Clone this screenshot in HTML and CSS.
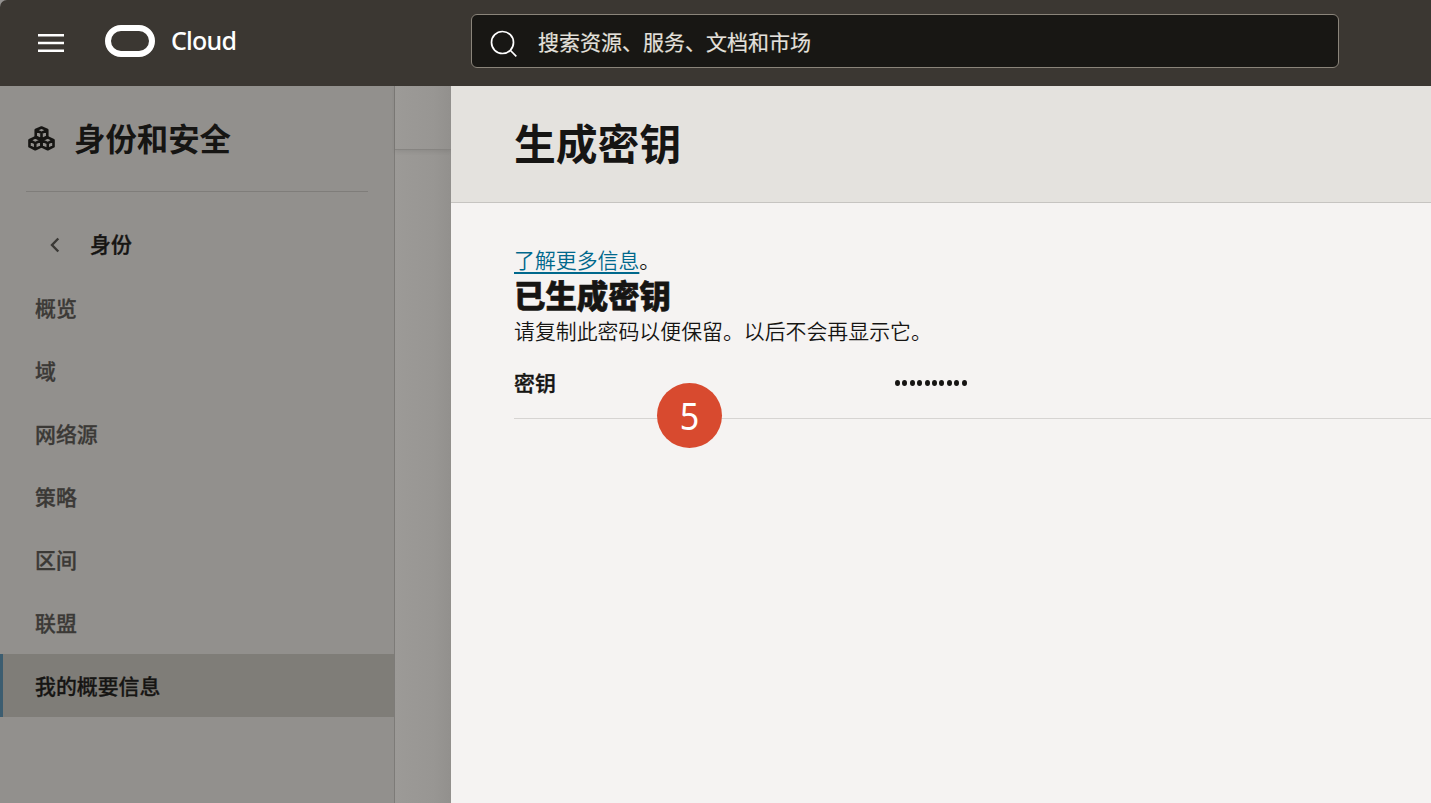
FILE: index.html
```html
<!DOCTYPE html>
<html lang="zh-CN">

<head>
    <meta charset="UTF-8">
    <meta name="viewport" content="width=device-width, initial-scale=1.0">
    <title>生成密钥</title>
    <link rel="stylesheet" href="styles.css">
</head>

<body>
    <header class="header">
        <svg class="menu" width="26" height="18" viewBox="0 0 26 18">
            <path d="M0 1.2h26M0 9h26M0 16.8h26" stroke="#fff" stroke-width="2.4" />
        </svg>
        <svg class="logo" width="50" height="32" viewBox="0 0 50 32">
            <rect x="3" y="3" width="44" height="26" rx="13" fill="none" stroke="#fff" stroke-width="6" />
        </svg>
        <span class="brand">Cloud</span>
        <div class="search">
            <svg width="28" height="28" viewBox="0 0 28 28" fill="none" stroke="#fff" stroke-width="1.7">
                <circle cx="12.5" cy="12.5" r="11" />
                <path d="M20 20l6.3 6.3" />
            </svg>
            <span>搜索资源、服务、文档和市场</span>
        </div>
    </header>
    <div class="main">
        <aside class="sidebar">
            <div class="side-title">
                <svg width="27" height="25" viewBox="0 0 28 26" fill="none" stroke="#161513" stroke-width="2.7" stroke-linejoin="round">
                    <path d="M14 1.5l6 2.700v6.800l-6 3-6-3V4.200z M8 4.200l6 3 6-3M14 7.200v6.600" />
                    <path d="M7.500 11.800l6.500 3v6.400l-6.500 3-6-3v-6.400z M1.500 14.800l6 3 6.500-3M7.500 17.800v6.400" />
                    <path d="M20.500 11.800l6 3v6.400l-6 3-6.500-3v-6.400z M14 14.800l6.500 3 6-3M20.500 17.800v6.400" />
                </svg>
                <h2>身份和安全</h2>
            </div>
            <div class="back">
                <svg width="10" height="16" viewBox="0 0 10 16">
                    <path d="M8.300 1.500L2 8l6.300 6.500" fill="none" stroke="#3a3835" stroke-width="2.4" />
                </svg>
                <span>身份</span>
            </div>
            <ul class="nav">
                <li>概览</li>
                <li>域</li>
                <li>网络源</li>
                <li>策略</li>
                <li>区间</li>
                <li>联盟</li>
                <li class="active">我的概要信息</li>
            </ul>
        </aside>
        <div class="page">
            <div class="page-top"></div>
        </div>
        <section class="panel">
            <div class="panel-head">
                <h1>生成密钥</h1>
            </div>
            <div class="panel-body">
                <p><a href="#">了解更多信息</a>。</p>
                <h3>已生成密钥</h3>
                <p>请复制此密码以便保留。以后不会再显示它。</p>
                <div class="row">
                    <span class="label">密钥</span>
                    <span class="dots"><i></i><i></i><i></i><i></i><i></i><i></i><i></i><i></i><i></i><i></i></span>
                    <span class="step"><b>5</b></span>
                </div>
            </div>
        </section>
    </div>
</body>

</html>
```
FILE: styles.css
```css
* {
    box-sizing: border-box;
}

body,
h1,
h2,
h3,
p,
ul {
    margin: 0;
    padding: 0;
}

body {
    height: 803px;
    overflow: hidden;
    background: #949290;
    color: #161513;
    font-family: "Noto Sans CJK SC", sans-serif;
    font-size: 20.900px;
}

svg {
    display: block;
    flex: none;
}

.header {
    display: flex;
    height: 86px;
    padding: 14px 0 0 38px;
    background: #3b3732;
    border-top-left-radius: 7px;
}

.menu {
    margin-top: 20px;
}

.logo {
    margin: 11px 0 0 41px;
}

.brand {
    width: 300px;
    margin-left: 16px;
    color: #fff;
    font: 500 25px/53px "Noto Sans", sans-serif;
    letter-spacing: -0.800px;
}

.search {
    display: flex;
    width: 868px;
    height: 54px;
    padding: 15px 18px;
    background: #181714;
    border: 1px solid #8a847a;
    border-radius: 6px;
    color: #e4e1dd;
    font-size: 21px;
    line-height: 22px;
}

.search span {
    margin-left: 20px;
    -webkit-text-stroke: 0.200px;
}

.main {
    display: flex;
    height: 717px;
}

.sidebar {
    width: 395px;
    background: #92908d;
    border-right: 1px solid #7d7b78;
}

.side-title {
    display: flex;
    align-items: center;
    height: 106px;
    margin: 0 26px;
    padding-left: 2px;
    border-bottom: 1px solid #7f7d7a;
}

.side-title h2 {
    margin-left: 19px;
    padding-bottom: 2px;
    font-size: 31.400px;
    font-weight: 600;
}

.back {
    display: flex;
    align-items: center;
    height: 84px;
    padding: 21px 0 0 50px;
    font-weight: 500;
    -webkit-text-stroke: 0.400px;
}

.back span {
    margin-left: 30px;
    padding-bottom: 3px;
}

.nav {
    list-style: none;
}

.nav li {
    height: 63px;
    padding-left: 35px;
    color: #3b3936;
    font-weight: 500;
    line-height: 63px;
    -webkit-text-stroke: 0.300px;
}

.nav .active {
    padding-left: 32px;
    background: #7f7d78;
    border-left: 3px solid #3c5d70;
    color: #161513;
}

.page {
    width: 56px;
    background: linear-gradient(to right, #9c9a97, #989693 70%, #92908d);
}

.page-top {
    height: 64px;
    border-bottom: 1px solid #868481;
    box-shadow: 0 2px 4px rgba(0, 0, 0, 0.08);
}

.panel {
    flex: 1;
    background: #f5f3f2;
}

.panel-head {
    height: 117px;
    padding-left: 63px;
    background: #e4e2de;
    border-bottom: 1px solid #c6c4c1;
}

.panel-head h1 {
    font-size: 41.800px;
    font-weight: 600;
    line-height: 112px;
}

.panel-body {
    padding: 39px 0 0 63px;
}

.panel-body p {
    font-weight: 350;
    line-height: 35px;
}

.panel-body a {
    color: #00688c;
    text-decoration: underline;
    text-decoration-thickness: 2px;
    text-underline-offset: 4px;
}

.panel-body h3 {
    font-size: 31.400px;
    font-weight: 800;
    line-height: 36px;
    -webkit-text-stroke: 0.600px;
}

.row {
    position: relative;
    display: flex;
    align-items: center;
    height: 71px;
    border-bottom: 1px solid #d6d4d2;
}

.label {
    width: 381px;
    padding-bottom: 2px;
    font-weight: 500;
    -webkit-text-stroke: 0.400px;
}

.dots {
    display: flex;
    gap: 2.400px;
}

.dots i {
    width: 5px;
    height: 6px;
    border-radius: 50%;
    background: #161513;
}

/* 步骤标记 */
.step {
    position: absolute;
    left: 142.500px;
    top: 34.500px;
    width: 65px;
    height: 65px;
    border-radius: 50%;
    background: #d84a2f;
    color: #fff;
    font: 38px/65px "Noto Sans", sans-serif;
    text-align: center;
}

.step b {
    display: block;
    font-weight: 400;
    transform: scaleX(0.9);
}
```
